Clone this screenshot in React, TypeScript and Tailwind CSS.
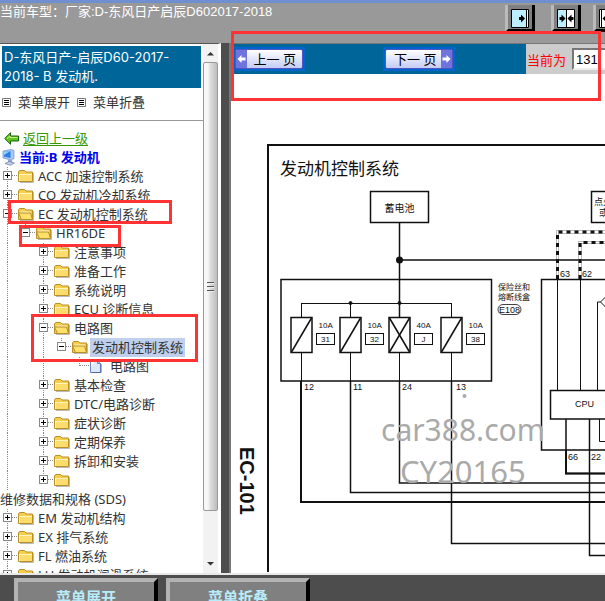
import type { ReactNode } from "react";
import clsx from "clsx";

type Cell = "line" | "blank";
type Toggle = "plus" | "minus" | "leaf";

interface TreeRow {
  label: string;
  guides: Cell[];
  toggle: Toggle;
  last?: boolean;
  selected?: boolean;
}

const deep: Cell[] = ["line", "blank"];

const engineRows: TreeRow[] = [
  { label: "ACC 加速控制系统", guides: [], toggle: "plus" },
  { label: "CO 发动机冷却系统", guides: [], toggle: "plus" },
  { label: "EC 发动机控制系统", guides: [], toggle: "minus" },
  { label: "HR16DE", guides: ["line"], toggle: "minus", last: true },
  { label: "注意事项", guides: deep, toggle: "plus" },
  { label: "准备工作", guides: deep, toggle: "plus" },
  { label: "系统说明", guides: deep, toggle: "plus" },
  { label: "ECU 诊断信息", guides: deep, toggle: "plus" },
  { label: "电路图", guides: deep, toggle: "minus" },
  { label: "发动机控制系统", guides: [...deep, "line"], toggle: "minus", last: true, selected: true },
  { label: "电路图", guides: [...deep, "line", "blank"], toggle: "leaf" },
  { label: "基本检查", guides: deep, toggle: "plus" },
  { label: "DTC/电路诊断", guides: deep, toggle: "plus" },
  { label: "症状诊断", guides: deep, toggle: "plus" },
  { label: "定期保养", guides: deep, toggle: "plus" },
  { label: "拆卸和安装", guides: deep, toggle: "plus" },
  { label: "", guides: deep, toggle: "plus", last: true },
];

const otherRows: TreeRow[] = [
  { label: "EM 发动机结构", guides: [], toggle: "plus" },
  { label: "EX 排气系统", guides: [], toggle: "plus" },
  { label: "FL 燃油系统", guides: [], toggle: "plus" },
  { label: "LU 发动机润滑系统", guides: [], toggle: "plus" },
];

function Folder({ open }: { open: boolean }) {
  return (
    <svg width="18" height="19" viewBox="0 0 18 19" className="shrink-0">
      <path d="M2 15.5h13.5V6" fill="none" stroke="#bbb" />
      <path d="M.5 14.5V5l1-1.5h5L8 5h6.5v9.5z" fill="#f7cd4c" stroke="#b8902a" />
      {open ? (
        <>
          <path d="M2.5 6.5h10v5h-10z" fill="#fff6c8" />
          <path d="M3.5 14.5h11l-2-6.5h-12z" fill="#ffe06a" stroke="#b8902a" />
        </>
      ) : (
        <>
          <path d="M1 7h13v7H1z" fill="#fddc6e" />
          <path d="M1 7.5h13M1.5 7v7" stroke="#fff5c0" fill="none" />
        </>
      )}
    </svg>
  );
}

function Page() {
  return (
    <svg width="18" height="19" viewBox="0 0 18 19" className="shrink-0">
      <path d="M.5 3.5h7l3 3v9H.5z" fill="#dce8fb" stroke="#6d86c4" />
      <path d="M1 4h4L1 11z" fill="#fff" />
      <path d="M7.5 3.5v3h3" fill="#9db7ea" stroke="#6d86c4" />
      <path d="M2 15.5h9V7" fill="none" stroke="#4f65a8" />
    </svg>
  );
}

function Guide({ line }: { line: boolean }) {
  return (
    <svg width="18" height="19" className="shrink-0">
      {line && <path d="M7.5 0v19" stroke="#888" strokeDasharray="1 1" />}
    </svg>
  );
}

function ToggleBox({ toggle, last }: { toggle: Toggle; last?: boolean }) {
  const lines = (
    <path
      d={last || toggle === "leaf" ? "M7.5 0v9M8 8.5h10" : "M7.5 0v19M8 8.5h10"}
      stroke="#888"
      strokeDasharray="1 1"
      fill="none"
    />
  );
  if (toggle === "leaf") {
    return <svg width="18" height="19" className="shrink-0">{lines}</svg>;
  }
  return (
    <button type="button" aria-label={toggle === "plus" ? "展开" : "折叠"} className="shrink-0">
      <svg width="18" height="19" className="block">
        {lines}
        <rect x="3.5" y="4.5" width="8" height="8" fill="#fff" stroke="#888" />
        <path d={toggle === "plus" ? "M5 8.5h5M7.5 6v5" : "M5 8.5h5"} stroke="#000" />
      </svg>
    </button>
  );
}

function Row({ row }: { row: TreeRow }) {
  return (
    <li className="flex h-[19px] items-center">
      {row.guides.map((g, i) => (
        <Guide key={i} line={g === "line"} />
      ))}
      <ToggleBox toggle={row.toggle} last={row.last} />
      {row.toggle === "leaf" ? <Page /> : <Folder open={row.toggle === "minus"} />}
      {row.label && (
        <a
          href="#"
          className={clsx(
            "px-0.5 leading-[19px] whitespace-nowrap",
            row.selected && "bg-[#c0d0ec]"
          )}
        >
          {row.label}
        </a>
      )}
    </li>
  );
}

function ListIcon() {
  return (
    <svg width="9" height="9" className="shrink-0">
      <path d="M.5.5h8v8h-8z" fill="#fff" stroke="#777" />
      <path d="M2 2.5h5M2 4.5h5M2 6.5h5" stroke="#000" />
    </svg>
  );
}

function Scrollbar() {
  return (
    <div className="flex w-[15px] shrink-0 flex-col items-center bg-[#f2f2f2]">
      <svg width="15" height="18" className="shrink-0">
        <path d="M4 11.5L7.5 8l3.5 3.5z" fill="#333" />
      </svg>
      <div className="flex w-full flex-1 flex-col items-center justify-center gap-0.5 rounded-xs border border-[#999] bg-linear-to-r from-[#f7f7f7] from-30% via-[#dcdcdc] to-[#bdbdbd]">
        <span className="h-0.5 w-[7px] border-b border-[#eee] bg-[#555]" />
        <span className="h-0.5 w-[7px] border-b border-[#eee] bg-[#555]" />
        <span className="h-0.5 w-[7px] border-b border-[#eee] bg-[#555]" />
      </div>
      <svg width="15" height="62" className="shrink-0">
        <path d="M4 51l3.5 3.5L11 51z" fill="#333" />
      </svg>
    </div>
  );
}

function Sidebar() {
  return (
    <nav className="relative flex w-[221px] shrink-0 overflow-hidden border-t border-r-3 border-[#555] border-r-white bg-white text-[13px] leading-[19px] text-[#333]">
      <div className="min-w-0 flex-1">
        <h1 className="mx-0.5 mt-0.5 bg-[#069] p-0.5 font-['Inter','Noto_Sans_CJK_SC',sans-serif] text-white">
          D-东风日产-启辰D60-2017-<br />2018- B 发动机.
        </h1>
        <div className="mt-1 flex h-[20px] items-center gap-[7px] pl-0.5">
          <ListIcon />
          <a href="#">菜单展开</a>
          <ListIcon />
          <a href="#">菜单折叠</a>
        </div>
        <hr className="mt-2 mb-2 border-[#999]" />
        <div className="flex h-[19px] items-center gap-1 pl-1">
          <svg width="15" height="13" viewBox="0 0 15 13" className="shrink-0">
            <path d="M.7 6.5L6.5.7V4h8v5h-8v3.3z" fill="#5fc31c" stroke="#17640a" />
            <path d="M3 6.5L6 4v1.5h7.5" stroke="#c3f58a" fill="none" />
          </svg>
          <a href="#" className="text-[#390] underline underline-offset-2">返回上一级</a>
        </div>
        <div className="flex h-[19px] items-center gap-0.5 pl-0.5 font-bold text-[#0000f0]">
          <svg width="15" height="17" viewBox="0 0 15 17" className="shrink-0">
            <path d="M1 2l8-1.5 3 1v8l-3 1.5-8-2z" fill="#a9c8f4" stroke="#6b8fd0" strokeWidth=".7" />
            <path d="M2 3l6.5-1v7L2 7.5z" fill="#2a7fe8" />
            <path d="M2 3l6.5-1L2 6z" fill="#8fd0ff" />
            <path d="M6 10.5l4 .5.5 3H6z" fill="#98a4cf" />
            <path d="M3 14.5l4-2 5.5 1.5-4 2.3z" fill="#c8cfe8" stroke="#6a76b0" strokeWidth=".7" />
          </svg>
          <span>当前:B 发动机</span>
        </div>
        <ul>
          {engineRows.map((row, i) => (
            <Row key={i} row={row} />
          ))}
        </ul>
        <p>维修数据和规格 (SDS)</p>
        <ul>
          {otherRows.map((row) => (
            <Row key={row.label} row={row} />
          ))}
        </ul>
      </div>
      <Scrollbar />
      {/* red marks over the tree */}
      <div className="pointer-events-none absolute top-[156px] left-2 h-[24px] w-[164px] border-3 border-[#f33]" />
      <div className="pointer-events-none absolute top-[181px] left-[19px] h-[22px] w-[102px] border-3 border-[#f33]" />
      <div className="pointer-events-none absolute top-[270px] left-[31px] h-[48px] w-[167px] border-3 border-[#f33]" />
    </nav>
  );
}

function Arrow({ flip }: { flip?: boolean }) {
  return (
    <svg width="11" height="18" viewBox="0 0 11 18" className="shrink-0">
      <path d="M0 0h11v18H0z" fill="#6e74dc" />
      <path
        d={flip ? "M9.5 9l-4-4v2.5h-4v3h4V13z" : "M1.5 9l4-4v2.5h4v3h-4V13z"}
        fill="#fff"
      />
    </svg>
  );
}

function PageButton({ label, next }: { label: string; next?: boolean }) {
  return (
    <button type="button" className="border-2 border-[#06c]">
      <span
        className={clsx(
          "flex h-5 w-[68px] items-center justify-between overflow-hidden rounded-xs border border-[#5055c0] bg-linear-to-b from-white to-[#c5ccf5] text-[13px] leading-[18px] text-black",
          next ? "pl-2" : "pr-1.5"
        )}
      >
        {!next && <Arrow />}
        {label}
        {next && <Arrow flip />}
      </span>
    </button>
  );
}

function Fuse({ x, amp, tag, relay }: { x: number; amp: string; tag: string; relay?: boolean }) {
  return (
    <g>
      <path d={`M${x} 303v14M${x} 353v28`} />
      <rect x={x - 10.5} y="317.5" width="21" height="35" strokeWidth="1.5" />
      <path d={`M${x - 10} 352l20-34`} strokeWidth="1.5" />
      {relay && <path d={`M${x - 10} 318l20 34`} strokeWidth="1.5" />}
      <rect x={x + 15} y="333.5" width="18" height="11" />
      <g fill="#111" stroke="none">
        <text x={x + 17} y="328" fontSize="8">{amp}</text>
        <text x={x + 24} y="342" fontSize="8" textAnchor="middle">{tag}</text>
      </g>
    </g>
  );
}

// sheet coordinates, cropped by the viewBox to the visible part
function Diagram() {
  return (
    <svg
      width="374"
      height="498"
      viewBox="231 74 374 498"
      className="block shrink-0 font-['Liberation_Sans','Noto_Sans_CJK_SC',sans-serif]"
      fill="none"
      stroke="#111"
    >
      <path d="M268 573V145h340" strokeWidth="2" />
      <path d="M370.5 191.5h58v31h-58zM608 191.5h-16.5v31H608" strokeWidth="1.5" />
      <path d="M399.5 223v95M399.5 260H606" strokeWidth="1.5" />
      <circle cx="399.5" cy="260" r="3.5" fill="#111" stroke="none" />

      <path d="M281 279.5h210.5V381H281z" strokeWidth="1.5" />
      <path d="M301.5 303.5h150" />
      <circle cx="350.5" cy="303" r="1.5" fill="#111" />
      <circle cx="399.5" cy="303" r="1.5" fill="#111" />
      <Fuse x={301.5} amp="10A" tag="31" />
      <Fuse x={350.5} amp="10A" tag="32" />
      <Fuse x={399.5} amp="40A" tag="J" relay />
      <Fuse x={451.5} amp="10A" tag="38" />

      <path d="M301 381v121h306" strokeWidth="2" />
      <path d="M350.5 381v111.5H606M399.5 381v102H606M451.5 381v162.5H606" strokeWidth="1.5" />

      {/* twisted pair to the control unit */}
      <path d="M557.5 279v-47H608M580 279v-36.5h28" stroke="#777" strokeWidth="3" />
      <path d="M557.5 279v-47H608M580 279v-36.5h28" stroke="#fff" strokeWidth="2" />
      <path d="M557.5 279v-47H608M580 279v-36.5h28" strokeWidth="3" strokeDasharray="4 4" />

      <path d="M608 279.5h-66.5V450H608" strokeWidth="1.5" />
      <path d="M557.5 280v110M580.5 280v110M597.5 390v-88h3l6-6M600.5 302l6 6" />
      <path d="M608 390.5h-57.5V419H608" strokeWidth="1.5" />
      <path d="M566 419v54.5h42" strokeWidth="1.5" />
      <path d="M566 450v23.5h42" strokeWidth="2" />
      <path d="M589.5 419v136.5H608" strokeWidth="1.5" />
      <path d="M599.5 419v22.5H608" />

      <rect x="498" y="304.5" width="23" height="10" rx="5" strokeWidth=".8" />
      <circle cx="464.5" cy="396" r="2" fill="#a9aab2" stroke="none" />

      <g fill="#111" stroke="none">
        <text x="280" y="175" fontSize="17">发动机控制系统</text>
        <text x="399.5" y="212" fontSize="10" textAnchor="middle">蓄电池</text>
        <text x="594" y="205" fontSize="9">点火</text>
        <text x="599" y="216" fontSize="9">或</text>
        <text x="498" y="290" fontSize="8">保险丝和</text>
        <text x="498" y="300" fontSize="8">熔断线盒</text>
        <g fontSize="9">
          <text x="499" y="313">E108</text>
          <text x="304" y="390">12</text>
          <text x="353" y="390">11</text>
          <text x="402" y="390">24</text>
          <text x="456" y="390">13</text>
          <text x="560" y="277">63</text>
          <text x="582" y="277">62</text>
          <text x="575" y="407">CPU</text>
          <text x="568" y="460">66</text>
          <text x="591" y="460">22</text>
        </g>
        <text transform="translate(240 447) rotate(90)" fontSize="20" fontWeight="bold">EC-101</text>
      </g>
      <g fill="#aaa" stroke="none" className="font-['Noto_Sans',sans-serif]">
        <text x="381" y="441" fontSize="30">car388.com</text>
        <text x="400" y="483" fontSize="31">CY20165</text>
      </g>
    </svg>
  );
}

function Viewer() {
  return (
    <main className="flex min-w-0 flex-1 flex-col overflow-hidden border-t border-l-2 border-[#777] bg-white">
      <div className="flex h-[30px] shrink-0">
        <div className="flex flex-1 items-center gap-[78px] bg-[#069] pl-0.5">
          <PageButton label="上一 页" />
          <PageButton label="下一 页" next />
        </div>
        <label className="flex w-[79px] shrink-0 items-center gap-1.5 overflow-hidden bg-[#ccc] pl-px font-['Liberation_Sans','Noto_Sans_CJK_SC',sans-serif] text-[13px] text-[#f00]">
          <span className="shrink-0 pt-1">当前为</span>
          <input
            type="text"
            defaultValue="131"
            className="h-[22px] w-[60px] shrink-0 border-2 border-[#777] border-r-[#eee] border-b-[#eee] bg-white px-0.5 text-black"
          />
        </label>
      </div>
      <div className="min-h-0 flex-1 overflow-hidden">
        <Diagram />
      </div>
    </main>
  );
}

function PaneButton({ label, children }: { label: string; children: ReactNode }) {
  return (
    <button
      type="button"
      aria-label={label}
      className="h-[27px] w-[30px] shrink-0 border-3 border-t-0 border-[#bbb] border-r-black border-b-black bg-[#808080] pt-1 pl-[3px]"
    >
      <svg width="20" height="20" viewBox="0 0 20 20" className="block">
        {children}
      </svg>
    </button>
  );
}

function FooterButton({ children }: { children: string }) {
  return (
    <button
      type="button"
      className="h-[38px] w-[144px] shrink-0 border-4 border-[#b3b3b3] border-r-black border-b-black bg-[#808080] text-[15px] leading-[30px] font-bold text-[#b9ecfb]"
    >
      {children}
    </button>
  );
}

export default function App() {
  return (
    <div className="relative flex h-screen flex-col overflow-hidden bg-[#4d4d4d] font-['Noto_Sans','Noto_Sans_CJK_SC',sans-serif]">
      <header className="flex h-[43px] shrink-0 overflow-hidden border-t-3 border-[#6f8fd0] bg-[#999] font-['Liberation_Sans','Noto_Sans_CJK_SC',sans-serif]">
        <p className="min-w-0 flex-1 text-[13px] leading-[18px] whitespace-nowrap text-white">
          {"当前车型\uff1a厂家:D-东风日产启辰D602017-2018"}
        </p>
        <div className="flex w-[100px] shrink-0 overflow-hidden pt-0.5">
          <PaneButton label="右">
            <path d="M.5.5h17v18H.5z" fill="#fff" stroke="#000" />
            <path d="M1 1h14v17H1z" fill="#bdeeff" />
            <path d="M15.5 1v17" stroke="#000" />
            <path d="M10 5.5l4 4-4 4zM8 8h3v3H8z" fill="#000" />
          </PaneButton>
          <div className="ml-4 shrink-0">
            <PaneButton label="中">
              <path d="M.5.5h17v18H.5z" fill="#fff" stroke="#000" />
              <path d="M1 1h8v17H1z" fill="#bdeeff" />
              <path d="M9.5 1v17" stroke="#000" />
              <path d="M4.5 5.500l4 4-4 4zM2.500 8h2v3h-2zM14.5 5.500l-4 4 4 4zM14.500 8h2v3h-2z" fill="#000" />
            </PaneButton>
          </div>
          <div className="ml-3 shrink-0">
            <PaneButton label="左">
              <path d="M.5.5h17v18H.5z" fill="#fff" stroke="#000" />
              <path d="M2.5 1v17" stroke="#000" />
              <path d="M7.5 5.5l-4 4 4 4zM7 8h3v3H7z" fill="#000" />
            </PaneButton>
          </div>
        </div>
      </header>

      <div className="flex min-h-0 flex-1 gap-2 border-b-2 border-[#e8e8e8] bg-[#4d4d4d]">
        <Sidebar />
        <Viewer />
      </div>

      <footer className="flex h-[26px] shrink-0 items-start gap-2 overflow-hidden bg-[#4d4d4d] pt-[3px] pl-3.5 font-['Noto_Sans_CJK_SC',sans-serif]">
        <FooterButton>菜单展开</FooterButton>
        <FooterButton>菜单折叠</FooterButton>
      </footer>

      {/* red mark over the pager */}
      <div className="pointer-events-none absolute top-[31px] right-1 left-[231px] h-[70px] border-3 border-[#f33]" />
    </div>
  );
}
